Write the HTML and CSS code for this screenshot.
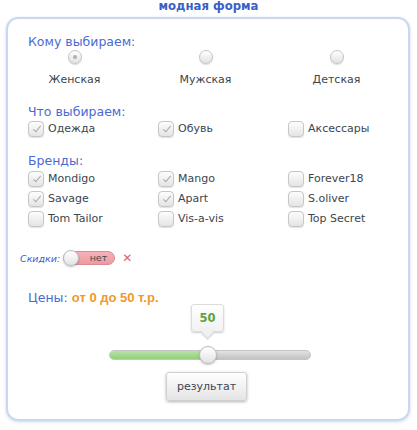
FILE: index.html
```html
<!DOCTYPE html>
<html>
<head>
<meta charset="utf-8">
<link rel="stylesheet" href="styles.css">
</head>
<body>
<div class="title">модная форма</div>
<div class="card">
  <div class="heading h-who">Кому выбираем:</div>
  <div class="radios">
    <div class="radio-item"><span class="radio checked"></span><span class="radio-label">Женская</span></div>
    <div class="radio-item"><span class="radio"></span><span class="radio-label">Мужская</span></div>
    <div class="radio-item"><span class="radio"></span><span class="radio-label">Детская</span></div>
  </div>
  <div class="heading h-what">Что выбираем:</div>
  <div class="checks">
    <label class="check"><span class="box on"></span>Одежда</label>
    <label class="check"><span class="box on"></span>Обувь</label>
    <label class="check"><span class="box"></span>Аксессары</label>
  </div>
  <div class="heading h-brands">Бренды:</div>
  <div class="checks brands">
    <label class="check"><span class="box on"></span>Mondigo</label>
    <label class="check"><span class="box on"></span>Mango</label>
    <label class="check"><span class="box"></span>Forever18</label>
    <label class="check"><span class="box on"></span>Savage</label>
    <label class="check"><span class="box on"></span>Apart</label>
    <label class="check"><span class="box"></span>S.oliver</label>
    <label class="check"><span class="box"></span>Tom Tailor</label>
    <label class="check"><span class="box"></span>Vis-a-vis</label>
    <label class="check"><span class="box"></span>Top Secret</label>
  </div>
  <div class="discount">
    <span class="discount-label">Скидки:</span>
    <span class="toggle"><span class="knob"></span><span class="toggle-text">нет</span></span>
    <span class="clear">✕</span>
  </div>
  <div class="price"><span class="price-label">Цены:</span> <span class="price-value">от 0 до 50 т.р.</span></div>
  <div class="slider-wrap">
    <div class="slider">
      <div class="tip">50</div>
      <div class="track"><div class="fill"></div><div class="handle"></div></div>
    </div>
  </div>
  <div class="actions"><button class="btn">результат</button></div>
</div>
</body>
</html>
```
FILE: styles.css
```css
html, body { margin: 0; padding: 0; background: #fff; }
body { font-family: "DejaVu Sans", Verdana, sans-serif; font-size: 11px; color: #3b4650; width: 417px; height: 430px; overflow: hidden; }

.title { text-align: center; font-weight: bold; font-size: 11.7px; color: #3a5fc8; line-height: 13px; height: 15px; }

.card {
  margin: 2px 7px 0 6px;
  height: 404px;
  border: 2px solid #c8d8ee;
  border-radius: 12px;
  box-shadow: 0 1px 3px rgba(120,140,170,0.35);
  box-sizing: border-box;
  padding: 0 0 0 20px;
}

.heading { color: #4a6ad2; font-size: 12.5px; line-height: 16px; }
.h-who { margin-top: 15px; }
.h-what { margin-top: 16px; }
.h-brands { margin-top: 16px; }

.radios { display: grid; grid-template-columns: repeat(3, 131px); margin-left: -19px; }
.radio-item { display: flex; flex-direction: column; align-items: center; }
.radio { width: 14px; height: 14px; border-radius: 50%; box-sizing: border-box; border: 1px solid #c4c4c4; background: linear-gradient(#ffffff, #e2e2e2); box-shadow: 0 1px 1px rgba(0,0,0,0.15); position: relative; }
.radio.checked::after { content: ""; position: absolute; left: 4px; top: 4px; width: 4px; height: 4px; border-radius: 50%; background: #b0b0b0; }
.radio-label { margin-top: 8px; line-height: 16px; font-size: 11px; color: #3b4650; }

.checks { display: grid; grid-template-columns: repeat(3, 130px); margin-top: 1px; }
.checks.brands { grid-auto-rows: 20px; margin-top: 0; }
.check { display: flex; align-items: center; height: 16px; font-size: 11px; line-height: 16px; }
.brands .check { height: 20px; }
.box { width: 16px; height: 16px; box-sizing: border-box; border: 1px solid #c6c6c6; border-radius: 4px; background: linear-gradient(#fdfdfd, #e4e4e4); box-shadow: 0 1px 1px rgba(0,0,0,0.12); margin-right: 4px; position: relative; flex: none; }
.box.on::after { content: ""; position: absolute; left: 6px; top: 2px; width: 3px; height: 7px; border: solid #a8a8a8; border-width: 0 1px 1px 0; transform: rotate(40deg); }

.discount { display: flex; align-items: center; margin-top: 20px; margin-left: -8px; height: 18px; }
.discount-label { font-style: italic; font-size: 9.5px; color: #3a5fc8; margin-right: 3px; }
.toggle { position: relative; width: 52px; height: 14px; border-radius: 7px; background: linear-gradient(#f6b2b8, #ec9aa3); border: 1px solid #d98c94; box-sizing: border-box; display: flex; align-items: center; justify-content: flex-end; padding-right: 7px; }
.knob { position: absolute; left: -1px; top: -2px; width: 16px; height: 16px; border-radius: 50%; background: linear-gradient(#ffffff, #e4e4e4); border: 1px solid #bdbdbd; box-sizing: border-box; box-shadow: 0 1px 2px rgba(0,0,0,0.25); }
.toggle-text { font-size: 9.5px; color: #4a4a4a; line-height: 12px; }
.clear { color: #d26a6a; font-size: 12px; font-weight: bold; margin-left: 7px; }

.price { margin-top: 23px; font-size: 13px; line-height: 16px; }
.price-label { color: #4a6ad2; font-size: 12.5px; }
.price-value { color: #f0982c; font-weight: bold; font-family: "Liberation Sans", Arial, sans-serif; font-size: 13px; }

.slider-wrap { display: flex; margin-left: 81px; margin-top: 1px; }
.slider { width: 202px; position: relative; padding-top: 43px; }
.tip { position: absolute; left: 82px; top: -3px; width: 33px; height: 28px; box-sizing: border-box; border: 1px solid #dcdcdc; border-radius: 3px; background: linear-gradient(#ffffff, #f1f1f1); box-shadow: 0 1px 2px rgba(0,0,0,0.2); color: #5da23e; font-weight: bold; font-size: 11.5px; text-align: center; line-height: 26px; }
.tip::after { content: ""; position: absolute; left: 11px; bottom: -6px; width: 8px; height: 8px; background: #f1f1f1; border-right: 1px solid #dcdcdc; border-bottom: 1px solid #dcdcdc; transform: rotate(45deg); box-shadow: 1px 1px 1px rgba(0,0,0,0.12); }
.track { position: relative; height: 10px; border-radius: 5px; background: linear-gradient(#e2e2e2, #c2c2c2); border: 1px solid #c4c4c4; box-sizing: border-box; }
.fill { height: 100%; width: 99px; border-radius: 5px 0 0 5px; background: linear-gradient(#b8e2a4, #92cf7c); }
.handle { position: absolute; left: 89px; top: -5px; width: 18px; height: 18px; box-sizing: border-box; border-radius: 50%; border: 1px solid #bcbcbc; background: linear-gradient(#ffffff, #e3e3e3); box-shadow: 0 1px 2px rgba(0,0,0,0.25); }

.actions { display: flex; margin-left: 138px; margin-top: 12px; }
.btn { width: 81px; height: 29px; font-family: "DejaVu Sans", Verdana, sans-serif; font-size: 11px; color: #3b4650; border: 1px solid #d0d0d0; border-radius: 3px; background: linear-gradient(#ffffff, #e4e4e4); box-shadow: 0 1px 3px rgba(0,0,0,0.3); padding: 0; }
```
